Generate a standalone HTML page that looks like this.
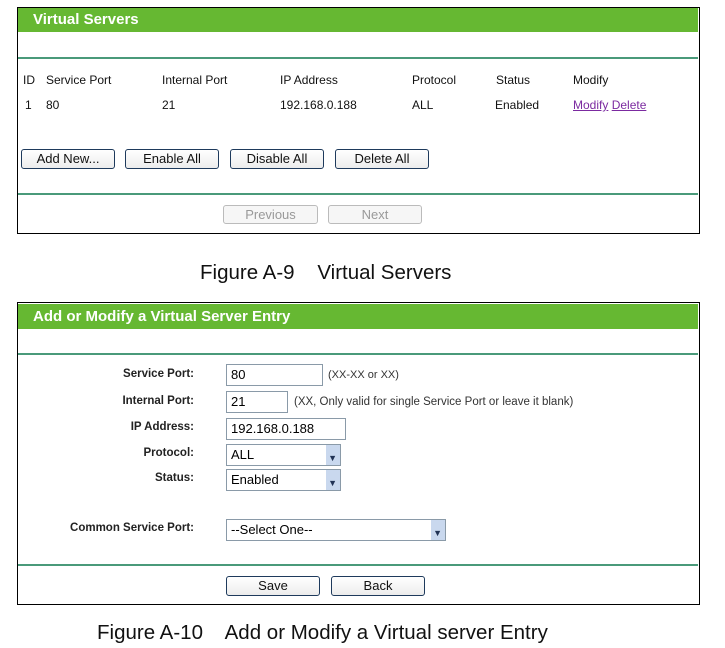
<!DOCTYPE html>
<html><head><style>
*{margin:0;padding:0;box-sizing:border-box}
body{width:725px;height:648px;background:#fff;font-family:"Liberation Sans",Arial,sans-serif;position:relative;overflow:hidden;color:#000}
.a{position:absolute;white-space:nowrap}
.box{position:absolute;border:1px solid #000;background:#fff}
.g{position:absolute;background:#66b832;color:#fff;font-weight:bold;font-size:15px;padding-left:15px}
.ln{position:absolute;height:2px;background:#4a9a7a}
.t{font-size:12px;color:#111}
.btn{position:absolute;border:1px solid #1e3a5c;border-radius:3px;background:linear-gradient(#fff,#ececec);font-size:13px;text-align:center;line-height:18px;color:#111}
.dis{border-color:#bbb;color:#999;background:#f6f6f6}
.in{position:absolute;border:1px solid #8a9aa8;background:#fff;font-size:13px;padding-left:4px;line-height:19px}
.sel:after{content:"";position:absolute;right:0;top:0;width:14px;height:100%;background:#c9d8ee}
.arr{position:absolute;right:3px;top:4px;font-size:9px;color:#235;z-index:2}
.lb{position:absolute;right:531px;font-size:11.5px;font-weight:bold;color:#222}
.cap{font-size:20.5px;color:#111}
a{color:#7b2aa0}
</style></head><body>
<div class="box" style="left:17px;top:7px;width:683px;height:227px"></div>
<div class="g" style="left:18px;top:8px;width:680px;height:24px;line-height:24px">Virtual Servers</div>
<div class="ln" style="left:18px;top:57px;width:680px"></div>
<div class="a t" style="left:23px;top:73px">ID</div>
<div class="a t" style="left:46px;top:73px">Service Port</div>
<div class="a t" style="left:162px;top:73px">Internal Port</div>
<div class="a t" style="left:280px;top:73px">IP Address</div>
<div class="a t" style="left:412px;top:73px">Protocol</div>
<div class="a t" style="left:496px;top:73px">Status</div>
<div class="a t" style="left:573px;top:73px">Modify</div>
<div class="a t" style="left:25px;top:98px">1</div>
<div class="a t" style="left:46px;top:98px">80</div>
<div class="a t" style="left:162px;top:98px">21</div>
<div class="a t" style="left:280px;top:98px">192.168.0.188</div>
<div class="a t" style="left:412px;top:98px">ALL</div>
<div class="a t" style="left:495px;top:98px">Enabled</div>
<div class="a t" style="left:573px;top:98px"><a style="text-decoration:underline">Modify</a> <a style="text-decoration:underline">Delete</a></div>
<div class="btn" style="left:21px;top:149px;width:94px;height:20px">Add New...</div>
<div class="btn" style="left:125px;top:149px;width:94px;height:20px">Enable All</div>
<div class="btn" style="left:230px;top:149px;width:94px;height:20px">Disable All</div>
<div class="btn" style="left:335px;top:149px;width:94px;height:20px">Delete All</div>
<div class="ln" style="left:18px;top:193px;width:680px"></div>
<div class="btn dis" style="left:223px;top:205px;width:95px;height:19px">Previous</div>
<div class="btn dis" style="left:328px;top:205px;width:94px;height:19px">Next</div>
<div class="a cap" style="left:200px;top:261px">Figure A-9&nbsp;&nbsp;&nbsp; Virtual Servers</div>

<div class="box" style="left:17px;top:302px;width:683px;height:303px"></div>
<div class="g" style="left:18px;top:304px;width:680px;height:25px;line-height:25px">Add or Modify a Virtual Server Entry</div>
<div class="ln" style="left:18px;top:353px;width:680px"></div>
<div class="lb" style="top:368px">Service Port:</div>
<div class="in" style="left:226px;top:364px;width:97px;height:22px">80</div>
<div class="a" style="left:328px;top:369px;font-size:11px;color:#333">(XX-XX or XX)</div>
<div class="lb" style="top:395px">Internal Port:</div>
<div class="in" style="left:226px;top:391px;width:62px;height:22px">21</div>
<div class="a" style="left:294px;top:396px;font-size:11.5px;color:#333">(XX, Only valid for single Service Port or leave it blank)</div>
<div class="lb" style="top:421px">IP Address:</div>
<div class="in" style="left:226px;top:418px;width:120px;height:22px">192.168.0.188</div>
<div class="lb" style="top:447px">Protocol:</div>
<div class="in sel" style="left:226px;top:444px;width:115px;height:22px">ALL<span class="arr">▼</span></div>
<div class="lb" style="top:472px">Status:</div>
<div class="in sel" style="left:226px;top:469px;width:115px;height:22px">Enabled<span class="arr">▼</span></div>
<div class="lb" style="top:522px">Common Service Port:</div>
<div class="in sel" style="left:226px;top:519px;width:220px;height:22px">--Select One--<span class="arr">▼</span></div>
<div class="ln" style="left:18px;top:564px;width:680px"></div>
<div class="btn" style="left:226px;top:576px;width:94px;height:20px">Save</div>
<div class="btn" style="left:331px;top:576px;width:94px;height:20px">Back</div>
<div class="a cap" style="left:97px;top:621px">Figure A-10&nbsp;&nbsp;&nbsp; Add or Modify a Virtual server Entry</div>
</body></html>
